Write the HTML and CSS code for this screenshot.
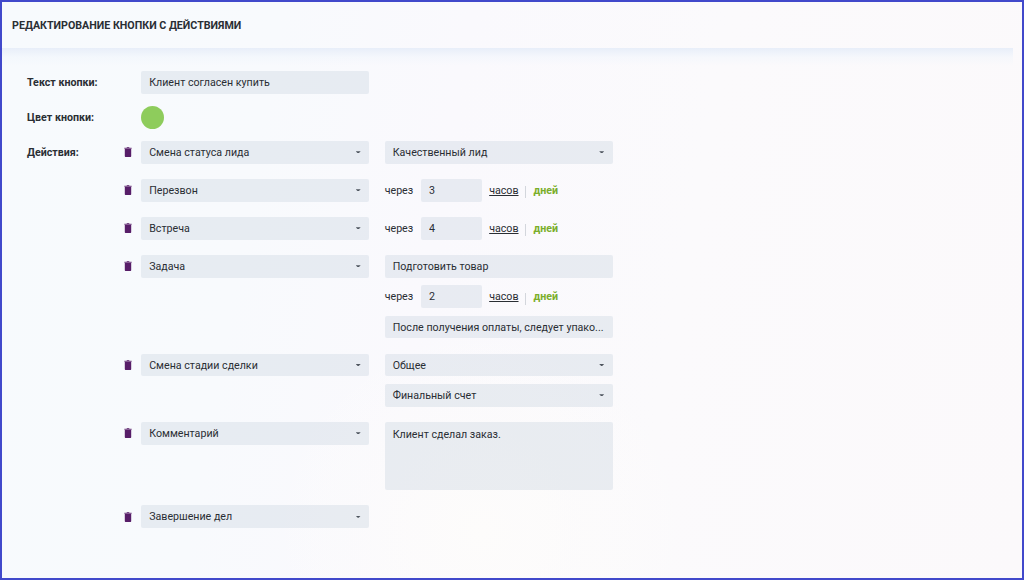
FILE: index.html
```html
<!DOCTYPE html>
<html lang="ru">
<head>
  <meta charset="UTF-8">
  <meta name="viewport" content="width=device-width, initial-scale=1.0">
  <title>Редактирование кнопки с действиями</title>
  <link rel="stylesheet" href="styles.css">
</head>
<body>

<svg class="sprite">
  <symbol id="trash" viewBox="0 0 8 10">
    <path d="M.3.8h2.2L3 .1h2l.5.7h2.2v1H.3z" opacity=".8"/>
    <path d="M.8 1.8h6.4V9c0 .6-.4 1-1 1H1.8c-.6 0-1-.4-1-1z"/>
  </symbol>
</svg>

<div class="page">
  <header class="header">
    <h1>Редактирование кнопки с действиями</h1>
  </header>
  <div class="header-shadow"></div>

  <main class="form">
    <div class="form-row">
      <label class="form-label" for="buttonText">Текст кнопки:</label>
      <input class="field" type="text" id="buttonText" value="Клиент согласен купить">
    </div>

    <div class="form-row">
      <span class="form-label">Цвет кнопки:</span>
      <button class="color" type="button" aria-label="Цвет"></button>
    </div>

    <div class="form-row">
      <span class="form-label">Действия:</span>
      <div class="actions">

        <div class="action">
          <svg class="trash"><use href="#trash"/></svg>
          <div class="field select">Смена статуса лида</div>
          <div class="params">
            <div class="field select">Качественный лид</div>
          </div>
        </div>

        <div class="action">
          <svg class="trash"><use href="#trash"/></svg>
          <div class="field select">Перезвон</div>
          <div class="params">
            <div class="delay">
              <span class="after">через</span>
              <input class="field number" type="text" value="3">
              <a class="hours">часов</a>
              <a class="days">дней</a>
            </div>
          </div>
        </div>

        <div class="action">
          <svg class="trash"><use href="#trash"/></svg>
          <div class="field select">Встреча</div>
          <div class="params">
            <div class="delay">
              <span class="after">через</span>
              <input class="field number" type="text" value="4">
              <a class="hours">часов</a>
              <a class="days">дней</a>
            </div>
          </div>
        </div>

        <div class="action">
          <svg class="trash"><use href="#trash"/></svg>
          <div class="field select">Задача</div>
          <div class="params">
            <input class="field" type="text" value="Подготовить товар">
            <div class="delay">
              <span class="after">через</span>
              <input class="field number" type="text" value="2">
              <a class="hours">часов</a>
              <a class="days">дней</a>
            </div>
            <div class="field">После получения оплаты, следует упако...</div>
          </div>
        </div>

        <div class="action">
          <svg class="trash"><use href="#trash"/></svg>
          <div class="field select">Смена стадии сделки</div>
          <div class="params">
            <div class="field select">Общее</div>
            <div class="field select">Финальный счет</div>
          </div>
        </div>

        <div class="action">
          <svg class="trash"><use href="#trash"/></svg>
          <div class="field select">Комментарий</div>
          <div class="params">
            <textarea class="field comment">Клиент сделал заказ.</textarea>
          </div>
        </div>

        <div class="action">
          <svg class="trash"><use href="#trash"/></svg>
          <div class="field select">Завершение дел</div>
        </div>

      </div>
    </div>
  </main>
</div>

</body>
</html>
```

FILE: styles.css
```css
* { box-sizing: border-box; }

body {
  margin: 0;
  font-family: Roboto, "Liberation Sans", sans-serif;
  font-size: 10.66px;
  color: #2a2e34;
}

.sprite { display: none; }

.page {
  height: 580px;
  overflow: hidden;
  border: 2px solid #4149cb;
  background:
    radial-gradient(ellipse at 47% 92%, #fdfcfb 0%, rgba(253, 252, 251, 0) 28%),
    linear-gradient(100deg, #f7fafd 0%, #f8fafd 25%, #faf9fd 42%, #fbfafc 65%, #fbf9fb 100%);
}

.header {
  display: flex;
  align-items: center;
  height: 46px;
  padding-left: 10px;
}
.header h1 {
  margin: 0;
  font-size: 10.68px;
  font-weight: 700;
  text-transform: uppercase;
}
.header-shadow {
  height: 18px;
  margin-right: 9px;
  background: linear-gradient(#e8eef9, rgba(240, 245, 252, 0.5) 50%, rgba(248, 250, 253, 0));
}

.form {
  display: flex;
  flex-direction: column;
  gap: 12.1px;
  padding: 4.8px 0 0 25px;
}
.form-row { display: flex; align-items: flex-start; }
.form-label {
  width: 114.2px;
  line-height: 24px;
  margin-bottom: -1.2px;
  font-weight: 700;
}

.field {
  display: block;
  width: 228px;
  height: 22.8px;
  padding: 0 8px;
  border: none;
  border-radius: 2px;
  background: rgba(204, 215, 225, 0.4);
  font: inherit;
  line-height: 23.6px;
  color: inherit;
  white-space: nowrap;
  outline: none;
}
input.field { padding-top: 0.5px; line-height: 22px; }
.select {
  display: flex;
  justify-content: space-between;
}
.select::after {
  content: "";
  width: 5px;
  height: 2px;
  margin: 10.4px 0.5px 0 0;
  background: #4f565f;
  clip-path: polygon(0 0, 100% 0, 60% 100%, 40% 100%);
}
.color {
  width: 23px;
  height: 23px;
  padding: 0;
  border: none;
  border-radius: 50%;
  background: #8ecc5c;
}

.actions {
  display: flex;
  flex-direction: column;
  gap: 15.2px;
  margin-left: -17.2px;
}
.action { display: flex; align-items: flex-start; }
.trash {
  width: 8px;
  height: 10px;
  margin: 6.2px 9.2px 0 0;
  fill: #571d68;
}
.params {
  display: flex;
  flex-direction: column;
  gap: 7.6px;
  margin-left: 15.5px;
}

.delay { display: flex; align-items: center; height: 22.8px; }
.after { width: 36.3px; }
.number { width: 60.8px; }
.hours { margin-left: 7.4px; text-decoration: underline; }
.days {
  display: flex;
  align-items: center;
  font-weight: 700;
  color: #7aae2b;
}
.days::before {
  content: "";
  width: 1px;
  height: 12px;
  margin: 4px 7.6px 0 6.5px;
  background: #d3d6dc;
}
.comment {
  height: 68.4px;
  padding: 6px 8px;
  line-height: 13px;
  resize: none;
}
```
